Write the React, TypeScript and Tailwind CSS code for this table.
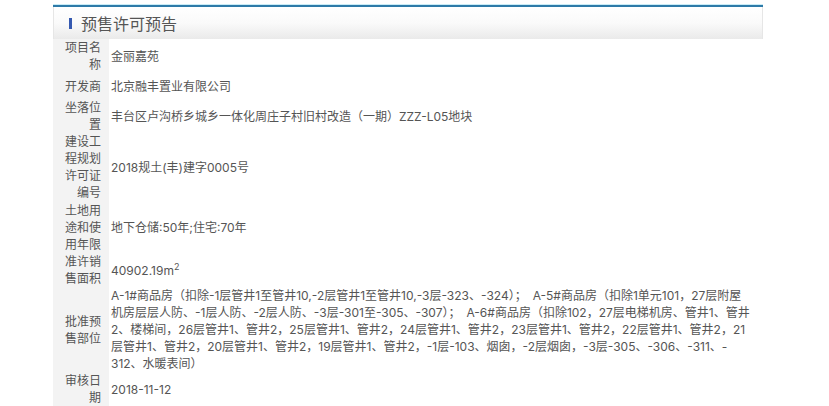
import React from 'react';

// 预售许可预告 detail panel

type Row = {
  label: string;
  value: React.ReactNode;
  h: string;
};

const saleScope = [
  'A-1#商品房（扣除-1层管井1至管井10,-2层管井1至管井10,-3层-323、-324）；\u3000A-5#商品房（扣除1单元101，27层附屋',
  '机房层层人防、-1层人防、-2层人防、-3层-301至-305、-307）；\u3000A-6#商品房（扣除102，27层电梯机房、管井1、管井',
  '2、楼梯间，26层管井1、管井2，25层管井1、管井2，24层管井1、管井2，23层管井1、管井2，22层管井1、管井2，21',
  '层管井1、管井2，20层管井1、管井2，19层管井1、管井2，-1层-103、烟囱，-2层烟囱，-3层-305、-306、-311、-',
  '312、水暖表间）',
];

const rows: Row[] = [
  { label: '项目名称', value: '金丽嘉苑', h: 'h-[34px]' },
  { label: '开发商', value: '北京融丰置业有限公司', h: 'h-[26px]' },
  { label: '坐落位置', value: '丰台区卢沟桥乡城乡一体化周庄子村旧村改造（一期）ZZZ-L05地块', h: 'h-[34px]' },
  { label: '建设工程规划许可证编号', value: '2018规土(丰)建字0005号', h: 'h-[68px]' },
  { label: '土地用途和使用年限', value: '地下仓储:50年;住宅:70年', h: 'h-[52px]' },
  {
    label: '准许销售面积',
    value: (
      <span>
        40902.19m<sup className="text-[9px]">2</sup>
      </span>
    ),
    h: 'h-[34px]',
  },
  {
    label: '批准预售部位',
    value: (
      <div>
        {saleScope.map((line) => (
          <div key={line} className="whitespace-nowrap">
            {line}
          </div>
        ))}
      </div>
    ),
    h: 'h-[85px]',
  },
  { label: '审核日期', value: '2018-11-12', h: 'h-[34px]' },
];

export default function App() {
  return (
    <div
      className="w-[829px] h-[406px] bg-white overflow-hidden pt-[4px]"
      style={{ fontFamily: 'Inter, "Noto Sans CJK SC", sans-serif' }}
    >
      <div className="ml-[53px] w-[710px]">
        {/* top accent */}
        <div className="h-[1px] bg-[#c9ecf7]" />
        <div className="h-[2px] bg-[#2e7aa8]" />

        {/* Header */}
        <div
          className="h-[32px] flex items-center pl-[15px] border-x border-[#e6e6e6] bg-gradient-to-b from-white via-[#fafafa] to-[#eaeaea]"
          style={{ fontFamily: '"Noto Sans CJK SC", sans-serif' }}
        >
          <span className="w-[3px] h-[11px] bg-[#3559b0] mr-[9px]" />
          <span className="text-[16px] text-[#555] leading-none">预售许可预告</span>
        </div>

        {/* Rows */}
        <div className="text-[12px] leading-[17px] text-[#555]">
          {rows.map((row) => (
            <div key={row.label} className={`flex ${row.h}`}>
              <div className="w-[56px] shrink-0 bg-[#f3f3f3] pl-[8px] pr-[8px] flex items-center justify-end text-right">
                <div>{row.label}</div>
              </div>
              <div className="flex-1 pl-[2px] flex items-center">{row.value}</div>
            </div>
          ))}
        </div>
      </div>
    </div>
  );
}
